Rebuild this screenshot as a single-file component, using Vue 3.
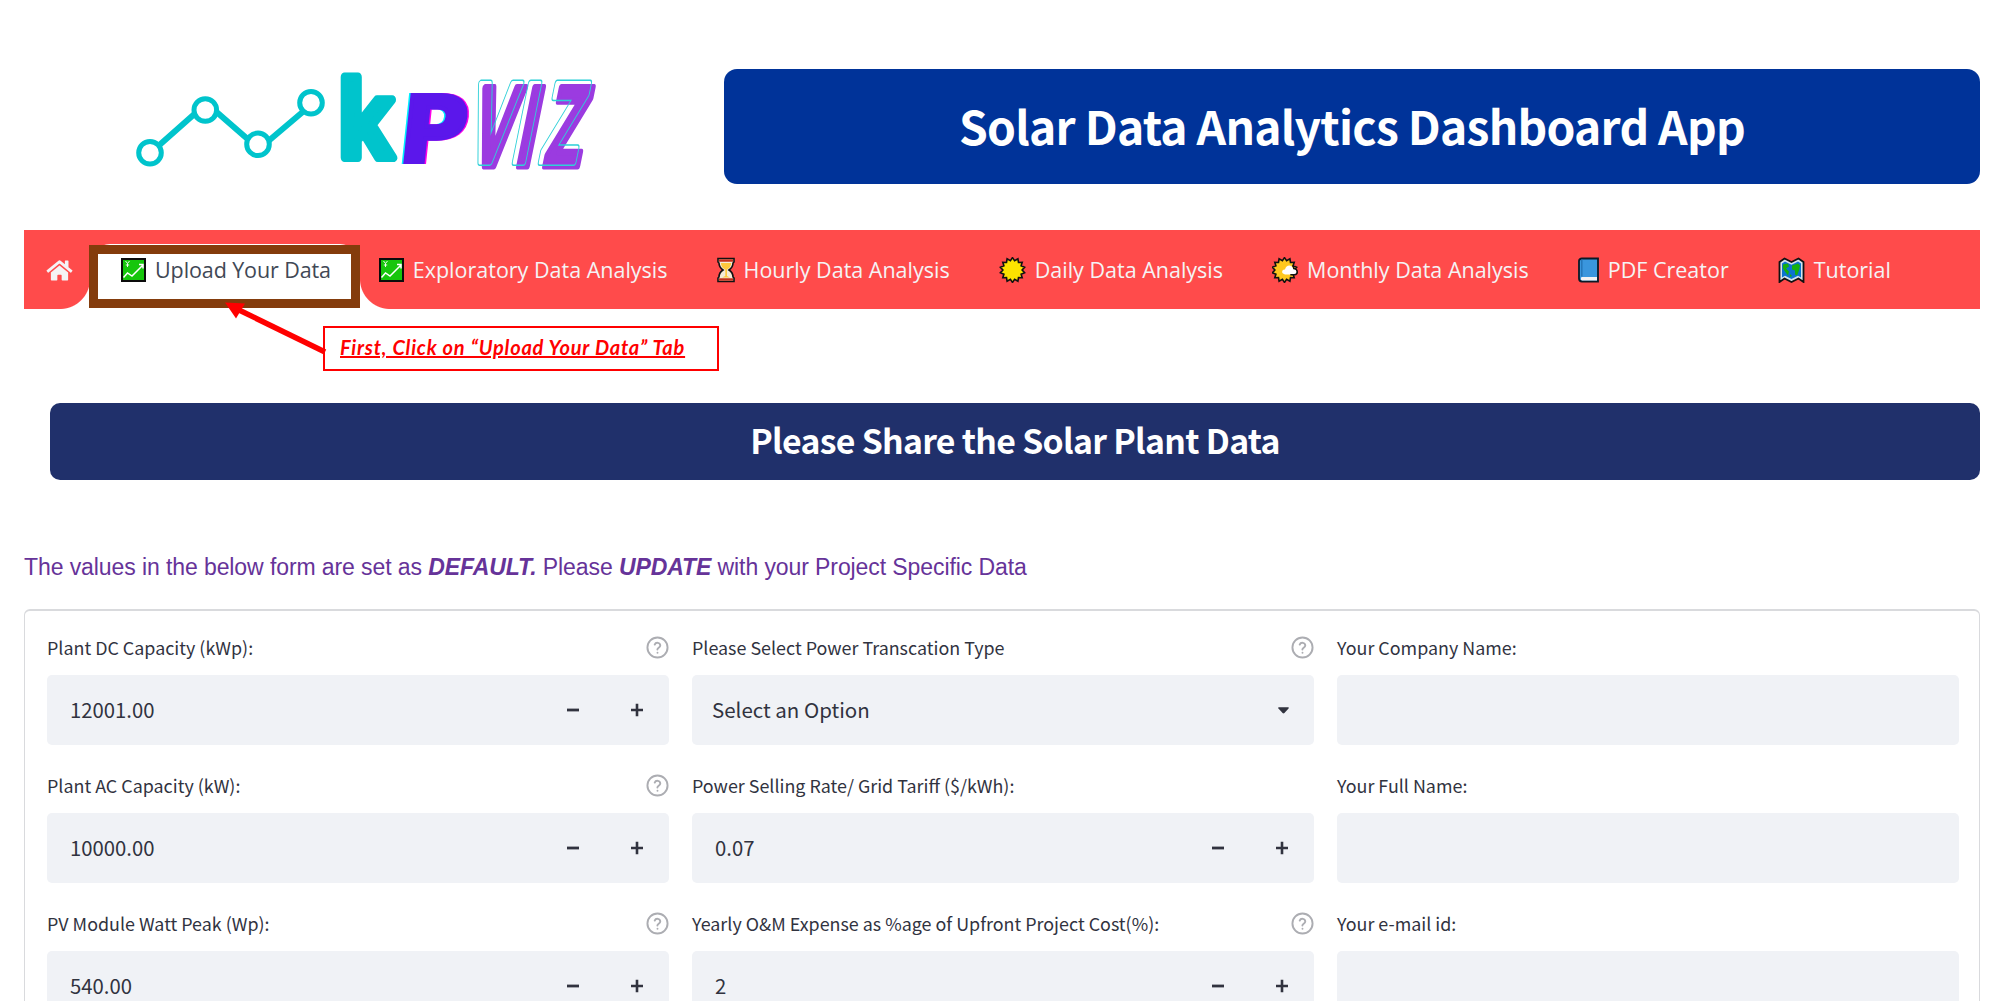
<script setup>
const tabs = [
  { icon: 'chart', label: 'Upload Your Data', active: true },
  { icon: 'chart', label: 'Exploratory Data Analysis' },
  { icon: 'hourglass', label: 'Hourly Data Analysis' },
  { icon: 'sun', label: 'Daily Data Analysis' },
  { icon: 'cloudy', label: 'Monthly Data Analysis' },
  { icon: 'book', label: 'PDF Creator' },
  { icon: 'map', label: 'Tutorial' },
]
const iconWidth = { chart: 25, hourglass: 18, sun: 27, cloudy: 26, book: 21, map: 27 }

const columns = [
  [
    { label: 'Plant DC Capacity (kWp):', help: true, type: 'number', value: '12001.00' },
    { label: 'Plant AC Capacity (kW):', help: true, type: 'number', value: '10000.00' },
    { label: 'PV Module Watt Peak (Wp):', help: true, type: 'number', value: '540.00' },
  ],
  [
    { label: 'Please Select Power Transcation Type', help: true, type: 'select', value: 'Select an Option' },
    { label: 'Power Selling Rate/ Grid Tariff ($/kWh):', type: 'number', value: '0.07' },
    { label: 'Yearly O&M Expense as %age of Upfront Project Cost(%):', help: true, type: 'number', value: '2' },
  ],
  [
    { label: 'Your Company Name:', type: 'text' },
    { label: 'Your Full Name:', type: 'text' },
    { label: 'Your e-mail id:', type: 'text' },
  ],
]

// Fourteen-point burst shared by both weather icons
const burst = Array.from({ length: 28 }, (_, i) => {
  const r = i % 2 ? 9.6 : 12.4
  const a = (i * Math.PI) / 14
  return `${(13.5 + r * Math.sin(a)).toFixed(1)},${(13 - r * Math.cos(a)).toFixed(1)}`
}).join(' ')
</script>

<template>
  <div class="page">
    <header class="header">
      <svg class="logo" viewBox="0 0 500 120" role="img" aria-label="kpviz">
        <g fill="none" stroke="#00c4cc" stroke-width="5">
          <path d="M40 84.500L75 53.500M96 51.500L127 78.500M149 80.500L185 50" stroke-width="6" />
          <circle cx="30" cy="92.700" r="11.300" />
          <circle cx="85.300" cy="50" r="11.300" />
          <circle cx="138" cy="84.300" r="11.300" />
          <circle cx="191" cy="42.700" r="11.300" />
        </g>
        <g class="k"><text transform="translate(217.500 98) scale(.85 1)">k</text></g>
        <g class="p">
          <text transform="translate(275.500 101.500) skewX(-6)" fill="#00f0ff" stroke="#00f0ff">P</text>
          <text transform="translate(278.500 101.500) skewX(-6)" fill="#ff00e6" stroke="#ff00e6">P</text>
          <text transform="translate(277 101.500) skewX(-6)" fill="#5b17eb" stroke="#5b17eb">P</text>
        </g>
        <g class="viz">
          <mask id="viz-outline" maskUnits="userSpaceOnUse" x="-50" y="-120" width="350" height="150">
            <rect x="-50" y="-120" width="350" height="150" fill="#fff" />
            <text fill="#000" stroke="#000" stroke-width="5">V<tspan x="76">I</tspan><tspan x="128">Z</tspan></text>
          </mask>
          <text transform="translate(348.500 105.500) skewX(-11.500) scale(.58 1)" fill="#9b3be0" stroke="#9b3be0" stroke-width="7">V<tspan x="76">I</tspan><tspan x="128">Z</tspan></text>
          <g transform="translate(344.500 102) skewX(-11.500) scale(.58 1)">
            <text mask="url(#viz-outline)" fill="none" stroke="#2fd0d8" stroke-width="8">V<tspan x="76">I</tspan><tspan x="128">Z</tspan></text>
          </g>
        </g>
      </svg>
      <h1 class="title">Solar Data Analytics Dashboard App</h1>
    </header>

    <nav class="nav">
      <div class="home">
        <svg width="27" height="23" viewBox="0 0 576 512" fill="#f5f3f5"><path d="M280 148L96 300v164a16 16 0 0 0 16 16h112a16 16 0 0 0 16-16v-96a16 16 0 0 1 16-16h64a16 16 0 0 1 16 16v96a16 16 0 0 0 16 16h112a16 16 0 0 0 16-16V300L296 148a12 12 0 0 0-16 0zM572 251l-84-69V44a12 12 0 0 0-12-12h-56a12 12 0 0 0-12 12v72l-89-74a48 48 0 0 0-61 0L4 251a12 12 0 0 0-2 17l26 31a12 12 0 0 0 17 2L280 107a12 12 0 0 1 16 0l235 194a12 12 0 0 0 17-2l26-31a12 12 0 0 0-2-17z" /></svg>
      </div>
      <div v-for="tab in tabs" :key="tab.label" class="tab" :class="{ active: tab.active }">
        <svg :width="iconWidth[tab.icon]" height="26" :viewBox="`0 0 ${iconWidth[tab.icon]} 26`">
          <template v-if="tab.icon === 'chart'">
            <rect x="1" y="2" width="23" height="22" fill="#16c60c" stroke="#0c0c0c" stroke-width="2" />
            <path d="M2.500 20.500l4-4.500 4.500 3L22 8M18 7.500h4v4" fill="none" stroke="#fff" stroke-width="1.500" />
            <path d="M4.500 4l2 2.500 2-2.500M6.500 6.500V10M4.800 8h3.400" fill="none" stroke="#fff" stroke-width=".9" />
          </template>
          <template v-else-if="tab.icon === 'hourglass'">
            <path d="M1 1.500h16V5l-1 1c0 3-1 5-4 7 3 2 4 4 4 7l1 1v3.500H1V21l1-1c0-3 1-5 4-7-3-2-4-4-4-7L1 5z" fill="#f4ead8" stroke="#111" stroke-width="1.600" />
            <path d="M3.800 6h10.400q-.5 5-4.200 6.500V19l3 1.500H5L8.300 19v-6.500Q4.500 11 3.800 6z" fill="#ffc83d" />
            <path d="M2 2.300h14v2.500H2zM2 21.300h14v2.500H2z" fill="#c3301c" />
          </template>
          <polygon v-else-if="tab.icon === 'sun'" :points="burst" fill="#fde300" stroke="#111" stroke-width="1.600" />
          <template v-else-if="tab.icon === 'cloudy'">
            <polygon :points="burst" fill="#ffc81e" stroke="#111" stroke-width="1.600" transform="translate(-1)" />
            <path d="M12 17c-3-1-2-5 1-4.500 1-5 7-5 8-1 5 0 5 6 1.500 6H13z" fill="#fff" />
            <path d="M20.500 8.500q1.200 1 1.300 3c4.500.5 4.500 6 .5 6.300h-4" fill="none" stroke="#111" stroke-width="1.500" />
          </template>
          <template v-else-if="tab.icon === 'book'">
            <path d="M4 1.500h16v23H4q-3 0-3-3V4q0-2.500 3-2.500z" fill="#3a96dd" stroke="#0c1a26" stroke-width="1.800" />
            <path d="M3.500 20H19v3.500H4q-2-.5-.5-3.500z" fill="#f3f3f3" />
            <path d="M3.800 2.500v17" stroke="#2476b8" stroke-width="1.500" />
          </template>
          <template v-else>
            <path d="M1.500 5l5-3.500 7 3.500 7-3.500 5 3.500v20l-5-3.500-7 3.500-7-3.500-5 3.500z" fill="#d4e3ee" stroke="#111" stroke-width="1.800" />
            <path d="M4 6.500L7 4.500l6.500 3.300L20 4.500l3 2v14l-3-1.700-6.500 3.300L7 18.800l-3 1.700z" fill="#0d74ce" />
            <path d="M5 7.500l5-1 1 3-3 2 3 3-1 4-3-4-2-3zM14 8.500l6-2 2 2-1 5-2 5-2-1v-4l-3-1zM12 17l2 2-2 1z" fill="#16b00c" />
          </template>
        </svg>
        <span>{{ tab.label }}</span>
      </div>
    </nav>

    <div class="marker"></div>
    <svg class="arrow" width="110" height="60" viewBox="220 298 110 60">
      <path d="M325 352L239 310" stroke="#f00" stroke-width="5.500" />
      <path d="M225 302.500l20 1-9 15z" fill="#f00" />
    </svg>
    <div class="callout">First, Click on “Upload Your Data” Tab</div>

    <h2 class="section">Please Share the Solar Plant Data</h2>

    <p class="note">The values in the below form are set as <b>DEFAULT.</b> Please <b>UPDATE</b> with your Project Specific Data</p>

    <form class="form">
      <div v-for="(column, i) in columns" :key="i" class="column">
        <div v-for="field in column" :key="field.label" class="field">
          <div class="label">
            <span>{{ field.label }}</span>
            <svg v-if="field.help" width="23" height="23" viewBox="0 0 24 24" fill="none" stroke="#acadb2" stroke-width="2" stroke-linecap="round"><circle cx="12" cy="12" r="10.500" /><path d="M9.100 9a3 3 0 0 1 5.800 1c0 2-3 2.600-3 4M12 17.500v.01" /></svg>
          </div>
          <div class="input" :class="field.type">
            <span class="value">{{ field.value }}</span>
            <template v-if="field.type === 'number'">
              <svg class="step" width="12" height="14" viewBox="0 0 12 14" stroke="#31333f" stroke-width="2.800"><path d="M0 7h12" /></svg>
              <svg class="step" width="12" height="14" viewBox="0 0 12 14" stroke="#31333f" stroke-width="2.600"><path d="M0 7h12M6 .8v12.400" /></svg>
            </template>
            <svg v-else-if="field.type === 'select'" width="11" height="7" viewBox="0 0 12 7" fill="#31333f"><path d="M.7 0h10.600q.8.400.2 1.200L7 6.300q-1 .8-2 0L.5 1.200Q-.1.400.7 0z" /></svg>
          </div>
        </div>
      </div>
    </form>
  </div>
</template>

<style>
body { margin: 0; background: #fff; }
</style>

<style scoped>
.page { position: relative; box-sizing: border-box; height: 1001px; overflow: hidden; padding: 69px 20px 0 24px; font-family: "Noto Sans CJK SC", "Open Sans", sans-serif; color: #31333f; }
.header { display: flex; height: 115px; }
.logo { width: 500px; height: 120px; margin: -9px 104px 0 96px; flex: none; }
.logo text { font-family: "Open Sans", sans-serif; font-weight: 700; }
.k text { font-size: 106px; fill: #00c4cc; stroke: #00c4cc; stroke-width: 9px; stroke-linejoin: round; }
.p text { font-family: "DejaVu Sans", sans-serif; font-size: 92px; stroke-width: 4px; }
.viz text { font-size: 110px; stroke-linejoin: round; }
.title { flex: 1; margin: 0; box-sizing: border-box; border-radius: 13px; background: #003399; color: #fff; font-size: 46.200px; letter-spacing: -.75px; line-height: 111px; text-align: center; }
.nav { display: flex; height: 79px; margin-top: 46px; background: #ff4b4b; color: #f5f3f5; font: 21.500px/79px "Open Sans", sans-serif; }
.home { display: flex; align-items: center; padding: 2px 17px 0 22px; }
.tab { display: flex; align-items: center; gap: 9px; padding: 0 24.500px; white-space: nowrap; }
.active { position: relative; box-sizing: border-box; height: 65px; margin: 14px -5.700px 0 0; padding: 0 29px 14px 31px; border-radius: 20px 20px 0 0; background: #fff; color: #414855; line-height: 50px; letter-spacing: -.1px; }
.active::before, .active::after { content: ""; position: absolute; bottom: 0; width: 30px; height: 30px; }
.active::before { right: 100%; background: radial-gradient(circle at 0 0, transparent 29.500px, #fff 30.500px); }
.active::after { left: 100%; background: radial-gradient(circle at 100% 0, transparent 29.500px, #fff 30.500px); }
.marker { position: absolute; left: 89px; top: 245px; width: 253px; height: 45px; border: 9px solid #843c0c; }
.arrow { position: absolute; left: 220px; top: 298px; }
.callout { box-sizing: border-box; width: 396px; height: 45px; margin: 17px 0 0 299px; padding-left: 15px; border: 2px solid #f00; color: #f00; font: italic 700 20px/39px Lato, sans-serif; letter-spacing: .78px; text-decoration: underline; white-space: nowrap; }
.section { height: 77px; margin: 32px 0 0 26px; border-radius: 10px; background: #20306b; color: #fff; font-size: 33.800px; letter-spacing: -.7px; line-height: 74px; text-align: center; }
.note { margin: 74px 0 0; height: 26px; color: #663399; font: 23px/26px "Liberation Sans", Arial, sans-serif; letter-spacing: -.09px; }
.note b { font-style: italic; }
.form { display: flex; gap: 23px; box-sizing: border-box; height: 500px; margin-top: 29px; padding: 24px 20px 0 22px; border: 1px solid #d9dadd; border-top-width: 2px; border-radius: 6px; }
.column { flex: 1; }
.field { height: 138px; }
.label { display: flex; justify-content: space-between; align-items: center; height: 24px; font-size: 17.900px; line-height: 24px; white-space: nowrap; }
.input { display: flex; align-items: center; box-sizing: border-box; height: 70px; margin-top: 16px; padding: 0 26px 0 23px; border-radius: 5px; background: #f0f2f6; }
.value { flex: 1; font-size: 20.300px; line-height: 68px; padding-bottom: 2px; }
.step + .step { margin-left: 52px; }
.input.select { padding: 0 25px 0 20px; }
.select .value { font-size: 20.500px; }
</style>
